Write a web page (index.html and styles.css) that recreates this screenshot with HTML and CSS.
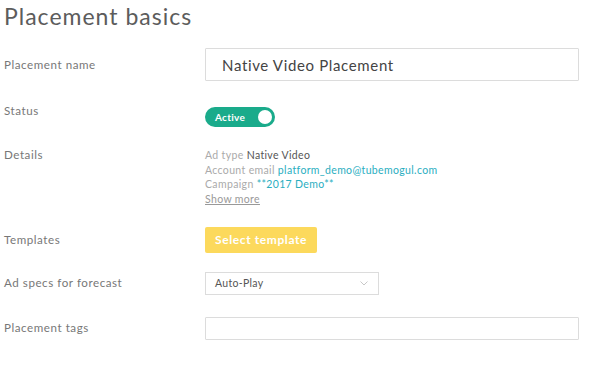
FILE: index.html
```html
<!DOCTYPE html>
<html lang="en">
<head>
<meta charset="UTF-8">
<meta name="viewport" content="width=device-width, initial-scale=1.0">
<title>Placement basics</title>
<link rel="stylesheet" href="styles.css">
</head>
<body>

<div class="container">
  <h1>Placement basics</h1>

  <div class="row row-name">
    <div class="label">Placement name</div>
    <div class="field">
      <input class="text-input big" type="text" value="Native Video Placement">
    </div>
  </div>

  <div class="row row-top row-status">
    <div class="label">Status</div>
    <div class="field">
      <div class="toggle">
        <span>Active</span>
        <span class="knob"></span>
      </div>
    </div>
  </div>

  <div class="row row-top row-details">
    <div class="label">Details</div>
    <div class="field details">
      <div><span class="muted">Ad type</span> <span class="value">Native Video</span></div>
      <div><span class="muted">Account email</span> <a class="link" href="#">platform_demo@tubemogul.com</a></div>
      <div><span class="muted">Campaign</span> <a class="link" href="#">**2017 Demo**</a></div>
      <div><a class="show-more" href="#">Show more</a></div>
    </div>
  </div>

  <div class="row row-templates">
    <div class="label">Templates</div>
    <div class="field">
      <button class="btn-yellow">Select template</button>
    </div>
  </div>

  <div class="row row-specs">
    <div class="label">Ad specs for forecast</div>
    <div class="field">
      <div class="select">
        <span>Auto-Play</span>
        <svg width="8" height="5" viewBox="0 0 8 5"><path d="M0.5 0.5l3.5 3.5 3.5-3.5" fill="none" stroke="#c8c8c8" stroke-width="1"/></svg>
      </div>
    </div>
  </div>

  <div class="row row-tags">
    <div class="label">Placement tags</div>
    <div class="field">
      <input class="text-input small" type="text">
    </div>
  </div>
</div>

</body>
</html>
```

FILE: styles.css
```css
body {
  margin: 0;
  padding: 0;
  background-color: #fff;
  font-family: Lato, "Open Sans", sans-serif;
  color: #666;
}
.container {
  padding: 0 25px 0 4px;
}
h1 {
  margin: 0;
  padding-top: 1px;
  font-size: 23px;
  line-height: 30px;
  font-weight: 400;
  color: #5c5c5c;
  letter-spacing: 1px;
}
.row {
  display: flex;
  align-items: center;
}
.row-top {
  align-items: flex-start;
}
.label {
  width: 201px;
  flex-shrink: 0;
  font-size: 11.6px;
  line-height: 14px;
  color: #777;
  letter-spacing: 0.55px;
}
.field {
  flex: 1;
}
.row-name { margin-top: 17px; }
.row-status { margin-top: 23px; }
.row-details { margin-top: 21px; }
.row-templates { margin-top: 20px; }
.row-specs { margin-top: 19px; }
.row-tags { margin-top: 22px; }

.text-input {
  display: block;
  width: 100%;
  box-sizing: border-box;
  border: 1px solid #dcdcdc;
  border-radius: 1px;
  font-family: inherit;
  color: #444;
  outline: none;
}
.text-input.big {
  height: 33px;
  padding: 0 16px;
  font-size: 15px;
  letter-spacing: 0.65px;
}
.text-input.small {
  height: 23px;
}

.toggle {
  margin-top: 3px;
  width: 70px;
  height: 20px;
  box-sizing: border-box;
  border-radius: 10px;
  background-color: #1aab8b;
  display: flex;
  align-items: center;
  justify-content: space-between;
  padding: 0 3px 0 10px;
  color: #fff;
  font-size: 10px;
  font-weight: 700;
  letter-spacing: 0.3px;
}
.knob {
  width: 14px;
  height: 14px;
  border-radius: 50%;
  background-color: #fff;
}

.details {
  font-size: 10.5px;
  line-height: 14.7px;
  letter-spacing: 0.35px;
}
.muted { color: #aaa; }
.value { color: #555; }
.link {
  color: #2aaebf;
  text-decoration: none;
}
.show-more {
  color: #999;
  text-decoration: underline;
}

.btn-yellow {
  width: 112px;
  height: 26px;
  border: none;
  border-radius: 2px;
  background-color: #fcd95c;
  color: #fff;
  font-family: inherit;
  font-size: 12px;
  font-weight: 700;
  letter-spacing: 0.6px;
  cursor: pointer;
}

.select {
  width: 174px;
  height: 23px;
  box-sizing: border-box;
  border: 1px solid #dcdcdc;
  display: flex;
  align-items: center;
  justify-content: space-between;
  padding: 0 10px 0 9px;
  font-size: 10.5px;
  color: #555;
  letter-spacing: 0.3px;
}
```
